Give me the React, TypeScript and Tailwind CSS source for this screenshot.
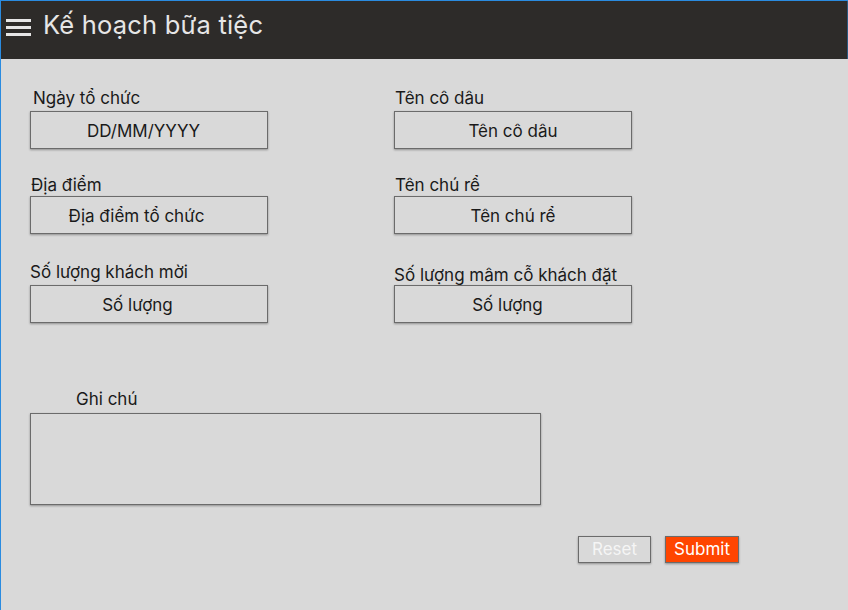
import React from 'react';

const font = { fontFamily: 'Inter, "Noto Sans", sans-serif' };

const boxClass =
  'h-[38px] border border-[#6b6b6b] bg-[#d9d9d9] shadow-[0_1px_2px_rgba(0,0,0,0.35)] flex items-center justify-center pt-[3px] text-[17px] text-[#1a1a1a]';

function Field({
  label,
  placeholder,
  labelClass = '',
  textClass = '',
}: {
  label: string;
  placeholder: string;
  labelClass?: string;
  textClass?: string;
}) {
  return (
    <div className="w-[238px]">
      <div className={`text-[17px] leading-[20px] text-[#1a1a1a] ${labelClass}`}>{label}</div>
      <div className={`mt-[3px] ${boxClass} ${textClass}`}>{placeholder}</div>
    </div>
  );
}

export default function App() {
  return (
    <div className="w-[848px] h-[610px] bg-[#d9d9d9] border-l border-t border-[#2a8be0] overflow-hidden" style={font}>
      {/* Header */}
      <div className="h-[58px] bg-[#2d2b29] flex items-center border-r border-[#2a5a80]">
        <div className="ml-[5px] mt-[-6px] flex flex-col gap-[4px]">
          <div className="w-[25px] h-[3px] bg-[#e6e6e6]" />
          <div className="w-[25px] h-[3px] bg-[#e6e6e6]" />
          <div className="w-[25px] h-[3px] bg-[#e6e6e6]" />
        </div>
        <div className="ml-[12px] mt-[-9px] text-[25.5px] text-[#e6e6e6] tracking-[0.2px]">Kế hoạch bữa tiệc</div>
      </div>

      {/* Form */}
      <div className="pl-[29px] pt-[29px]">
        <div className="flex gap-[126px]">
          <div className="flex flex-col">
            <Field label="Ngày tổ chức" placeholder="DD/MM/YYYY" labelClass="pl-[3px]" textClass="pr-[11px]" />
            <div className="h-[26px]" />
            <Field label="Địa điểm" placeholder="Địa điểm tổ chức" labelClass="pl-[1px] mb-[-2px]" textClass="pr-[25px]" />
            <div className="h-[28px]" />
            <Field label="Số lượng khách mời" placeholder="Số lượng" textClass="pr-[23px]" />
          </div>
          <div className="flex flex-col">
            <Field label="Tên cô dâu" placeholder="Tên cô dâu" labelClass="pl-[1px]" />
            <div className="h-[26px]" />
            <Field label="Tên chú rể" placeholder="Tên chú rể" labelClass="pl-[1px] mb-[-2px]" />
            <div className="h-[28px]" />
            <div className="w-[238px]">
              <div className="text-[17px] leading-[20px] text-[#1a1a1a] mt-[3px]">Số lượng mâm cỗ khách đặt</div>
              <div className={`${boxClass} pr-[11px]`}>Số lượng</div>
            </div>
          </div>
        </div>

        <div className="mt-[66px]">
          <div className="pl-[46px] text-[17px] leading-[20px] text-[#1a1a1a]">Ghi chú</div>
          <div className="mt-[4px] w-[511px] h-[92px] border border-[#6b6b6b] bg-[#d9d9d9] shadow-[0_1px_2px_rgba(0,0,0,0.35)]" />
        </div>

        <div className="mt-[31px] flex gap-[14px] pl-[548px]">
          <div className="w-[73px] h-[27px] border border-[#6b6b6b] bg-[#d9d9d9] shadow-[0_1px_2px_rgba(0,0,0,0.35)] flex items-center justify-center pt-[1px] text-[17px] text-[#f5f5f5]">
            Reset
          </div>
          <div className="w-[74px] h-[27px] border border-[#6b6b6b] bg-[#ff4500] shadow-[0_1px_2px_rgba(0,0,0,0.35)] flex items-center justify-center pt-[1px] text-[17px] text-white">
            Submit
          </div>
        </div>
      </div>
    </div>
  );
}
